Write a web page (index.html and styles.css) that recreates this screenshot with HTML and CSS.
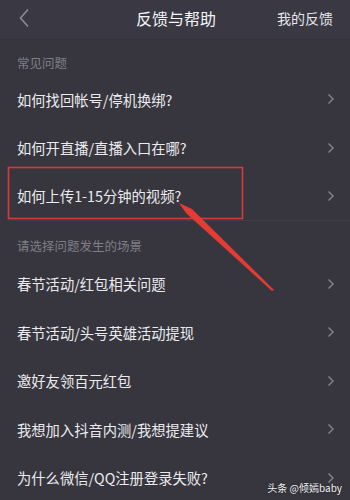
FILE: index.html
```html
<!DOCTYPE html>
<html lang="zh">
<head>
<meta charset="utf-8">
<link rel="stylesheet" href="styles.css">
</head>
<body>
<div class="page">
  <header class="topbar">
    <svg class="back" width="12" height="20" viewBox="0 0 12 20"><polyline points="9,1.5 1.5,10 9,18.5" fill="none" stroke="#8d8c94" stroke-width="1.6"/></svg>
    <div class="title">反馈与帮助</div>
    <div class="mine">我的反馈</div>
  </header>

  <div class="label label-first">常见问题</div>
  <div class="row"><span>如何找回帐号/停机换绑?</span><svg class="chev" width="8" height="12" viewBox="0 0 8 12"><polyline points="1.5,1.5 6,6 1.5,10.5" fill="none" stroke="#86858d" stroke-width="1.4"/></svg></div>
  <div class="row"><span>如何开直播/直播入口在哪?</span><svg class="chev" width="8" height="12" viewBox="0 0 8 12"><polyline points="1.5,1.5 6,6 1.5,10.5" fill="none" stroke="#86858d" stroke-width="1.4"/></svg></div>
  <div class="row row-last"><span>如何上传1-15分钟的视频?</span><svg class="chev" width="8" height="12" viewBox="0 0 8 12"><polyline points="1.5,1.5 6,6 1.5,10.5" fill="none" stroke="#86858d" stroke-width="1.4"/></svg></div>

  <div class="label label-second">请选择问题发生的场景</div>
  <div class="row"><span>春节活动/红包相关问题</span><svg class="chev" width="8" height="12" viewBox="0 0 8 12"><polyline points="1.5,1.5 6,6 1.5,10.5" fill="none" stroke="#86858d" stroke-width="1.4"/></svg></div>
  <div class="row"><span>春节活动/头号英雄活动提现</span><svg class="chev" width="8" height="12" viewBox="0 0 8 12"><polyline points="1.5,1.5 6,6 1.5,10.5" fill="none" stroke="#86858d" stroke-width="1.4"/></svg></div>
  <div class="row"><span>邀好友领百元红包</span><svg class="chev" width="8" height="12" viewBox="0 0 8 12"><polyline points="1.5,1.5 6,6 1.5,10.5" fill="none" stroke="#86858d" stroke-width="1.4"/></svg></div>
  <div class="row"><span>我想加入抖音内测/我想提建议</span><svg class="chev" width="8" height="12" viewBox="0 0 8 12"><polyline points="1.5,1.5 6,6 1.5,10.5" fill="none" stroke="#86858d" stroke-width="1.4"/></svg></div>
  <div class="row"><span>为什么微信/QQ注册登录失败?</span><svg class="chev" width="8" height="12" viewBox="0 0 8 12"><polyline points="1.5,1.5 6,6 1.5,10.5" fill="none" stroke="#86858d" stroke-width="1.4"/></svg></div>

  <svg class="annot" width="350" height="500" viewBox="0 0 350 500">
    <rect x="8.5" y="167.5" width="234" height="51" fill="none" stroke="#d9393a" stroke-width="1.6"/>
    <polygon points="179,203 192,209 274,290 272,291 186,213" fill="#e53b35"/>
  </svg>

  <div class="watermark">头条 @倾嫣baby</div>
</div>
</body>
</html>
```

FILE: styles.css
```css
* { box-sizing: border-box; }
html, body { margin: 0; padding: 0; }
body {
  background: #37363f;
  font-family: "Noto Sans CJK SC", "Noto Sans", sans-serif;
  width: 350px;
  height: 500px;
  overflow: hidden;
}
.page {
  position: relative;
  width: 350px;
  height: 500px;
  background: #37363f;
}
.topbar {
  height: 40px;
  display: grid;
  grid-template-columns: 1fr auto 1fr;
  align-items: center;
  padding: 0 17px 4px 19px;
  background: #393843;
  border-bottom: 1px solid #34333c;
}
.back { justify-self: start; }
.title {
  color: #f4f4f6;
  font-size: 16px;
}
.mine {
  justify-self: end;
  color: #e6e6ea;
  font-size: 14px;
}
.label {
  color: #7f7e87;
  font-size: 12.5px;
  line-height: 16px;
  padding-left: 17px;
}
.label-first { height: 35px; padding-top: 15px; }
.label-second { height: 39px; padding-top: 17px; }
.row {
  height: 48.5px;
  display: flex;
  align-items: center;
  justify-content: space-between;
  padding: 0 15px 0 17px;
  color: #ebebee;
  font-size: 14.3px;
}
.row-last { border-bottom: 1px solid #403f49; margin-left: 8px; padding-left: 9px; }
.chev { flex: none; }
.annot {
  position: absolute;
  left: 0;
  top: 0;
  pointer-events: none;
}
.watermark {
  position: absolute;
  right: 8px;
  bottom: 5px;
  color: #f2f2f2;
  font-size: 10px;
  text-shadow: 0 0 2px rgba(0,0,0,0.6);
}
```
